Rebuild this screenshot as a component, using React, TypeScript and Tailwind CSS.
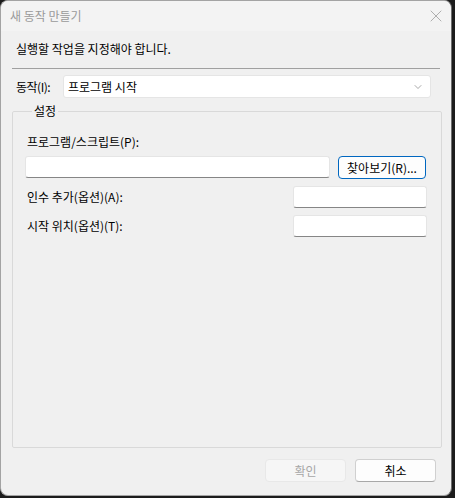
import { ChevronDown, X } from "lucide-react";

const font = { fontFamily: '"Noto Sans CJK KR", "Noto Sans", sans-serif' };

function TextBox({ className }: { className?: string }) {
	return (
		<div
			className={
				"h-[22px] rounded-[3px] border border-[#e5e5e5] border-b-[#868686] bg-white " +
				(className ?? "")
			}
		/>
	);
}

export default function App() {
	return (
		<div
			className="flex h-[498px] w-[455px] items-start bg-[#1c1c1c] text-[12px] leading-[16px] text-black"
			style={font}
		>
			<div className="flex h-[496px] w-[452px] flex-col overflow-hidden rounded-[8px] border border-[#a3a3a3] border-r-[#6e6e6e] bg-[#f0f0f0]">
				{/* title bar */}
				<div className="flex h-[30px] shrink-0 items-center justify-between bg-[#f3f3f3] pl-[9px] pr-[5px]">
					<span className="text-[#9a9a9a]">새 동작 만들기</span>
					<X className="h-[20px] w-[20px] text-[#a0a0a0]" strokeWidth={1} />
				</div>

				<div className="flex flex-1 flex-col px-[11px]">
					<div className="mt-[10px] pl-[4px]">실행할 작업을 지정해야 합니다.</div>
					<div className="mt-[11px] h-px w-[428px] bg-[#a0a0a0]" />

					<div className="mt-[6px] flex items-center">
						<span className="w-[51px] pl-[4px] tracking-[-0.5px]">동작(I):</span>
						<div className="flex h-[23px] w-[368px] items-center justify-between rounded-[3px] border border-[#e5e5e5] bg-white pl-[4px] pr-[6px]">
							<span>프로그램 시작</span>
							<ChevronDown className="h-[12px] w-[12px] text-[#7a7a7a]" strokeWidth={1.3} />
						</div>
					</div>

					<fieldset className="mt-[5px] h-[345px] w-[430px] rounded-[2px] border border-[#d9d9d9] pb-[10px] pl-[12px] pr-[14px]">
						<legend className="ml-[7px] px-[2px]">설정</legend>
						<div className="mt-[15px] pl-[2px]">프로그램/스크립트(P):</div>
						<div className="mt-[6px] flex items-start gap-[8px]">
							<TextBox className="w-[305px]" />
							<div className="flex h-[23px] w-[88px] items-center justify-center rounded-[4px] border-[1.5px] border-[#0067c0] bg-[#fdfdfd]">
								찾아보기(R)...
							</div>
						</div>
						<div className="mt-[7px] flex items-center justify-between">
							<span className="pl-[2px]">인수 추가(옵션)(A):</span>
							<TextBox className="w-[134px]" />
						</div>
						<div className="mt-[7px] flex items-center justify-between">
							<span className="pl-[2px]">시작 위치(옵션)(T):</span>
							<TextBox className="w-[134px]" />
						</div>
					</fieldset>

					<div className="mt-[11px] flex justify-end gap-[9px] pr-[4px]">
						<div className="flex h-[23px] w-[81px] items-center justify-center rounded-[4px] border border-[#e8e8e8] bg-[#f6f6f6] text-[#a6a6a6]">
							확인
						</div>
						<div className="flex h-[23px] w-[81px] items-center justify-center rounded-[4px] border border-[#d0d0d0] border-b-[#a8a8a8] bg-[#fdfdfd]">
							취소
						</div>
					</div>
				</div>
			</div>
		</div>
	);
}
